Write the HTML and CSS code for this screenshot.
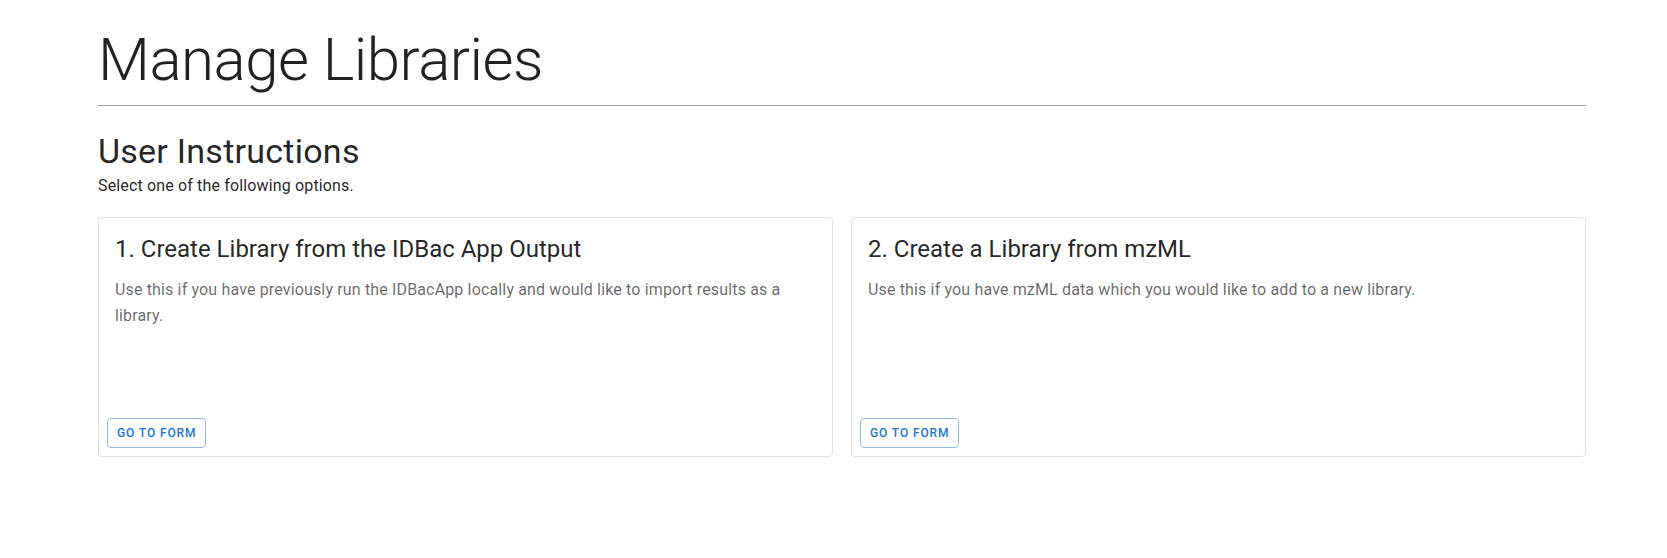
FILE: index.html
```html
<!DOCTYPE html>
<html lang="en">
<head>
<meta charset="utf-8">
<title>Manage Libraries</title>
<link rel="stylesheet" href="styles.css">
</head>
<body>
<main class="page">
  <h1 class="page-title">Manage Libraries</h1>
  <hr class="divider">
  <section class="instructions">
    <h2 class="section-title">User Instructions</h2>
    <p class="section-sub">Select one of the following options.</p>
    <div class="cards">
      <div class="card">
        <div class="card-title">1. Create Library from the IDBac App Output</div>
        <div class="card-text">Use this if you have previously run the IDBacApp locally and would like to import results as a library.</div>
        <div class="card-actions"><button class="btn-outline">Go to form</button></div>
      </div>
      <div class="card">
        <div class="card-title">2. Create a Library from mzML</div>
        <div class="card-text">Use this if you have mzML data which you would like to add to a new library.</div>
        <div class="card-actions"><button class="btn-outline">Go to form</button></div>
      </div>
    </div>
  </section>
</main>
</body>
</html>
```

FILE: styles.css
```css
* { box-sizing: border-box; }
html, body { margin: 0; padding: 0; background: #fff; }
body {
  font-family: Roboto, "Noto Sans", "Liberation Sans", sans-serif;
  color: rgba(0, 0, 0, 0.87);
}
.page {
  padding: 24px 81px 0 98px;
}
.page-title {
  margin: 0;
  font-size: 60px;
  font-weight: 300;
  line-height: 72px;
  letter-spacing: -0.5px;
}
.divider {
  margin: 9px 0 0;
  border: 0;
  border-top: 1px solid #9e9e9e;
  height: 0;
}
.instructions {
  padding-top: 25px;
}
.section-title {
  margin: 0;
  font-size: 34px;
  font-weight: 400;
  line-height: 40px;
  letter-spacing: 0.25px;
}
.section-sub {
  margin: 5px 0 0;
  font-size: 16px;
  line-height: 20px;
  letter-spacing: 0.15px;
}
.cards {
  display: grid;
  grid-template-columns: 1fr 1fr;
  gap: 18px;
  margin-top: 21px;
}
.card {
  display: flex;
  flex-direction: column;
  height: 240px;
  border: 1px solid #e0e0e0;
  border-radius: 4px;
}
.card-title {
  padding: 15px 16px 0;
  font-size: 24px;
  line-height: 32px;
  font-weight: 400;
}
.card-text {
  padding: 12px 16px 0;
  font-size: 16px;
  line-height: 25.5px;
  letter-spacing: 0.15px;
  color: rgba(0, 0, 0, 0.6);
}
.card-actions {
  margin-top: auto;
  padding: 8px;
  display: flex;
}
.btn-outline {
  height: 30px;
  padding: 0 9px;
  border: 1px solid #90b9e6;
  border-radius: 4px;
  background: #fff;
  color: #1976d2;
  font-family: Roboto, "Noto Sans", sans-serif;
  font-size: 12px;
  font-weight: 500;
  letter-spacing: 0.9px;
  text-transform: uppercase;
  cursor: pointer;
}
```
